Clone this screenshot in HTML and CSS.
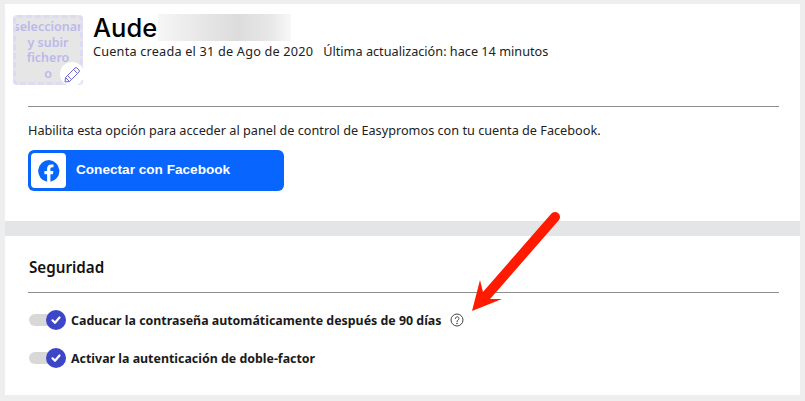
FILE: index.html
```html
<!DOCTYPE html>
<html>
    <head>
        <meta charset="utf-8">
        <title>Cuenta</title>
        <link rel="stylesheet" href="styles.css">
    </head>
    <body>
        <div class="frame">
            <section class="account">
                <div class="profile">
                    <div class="avatar">
                        <div class="avatar-text">seleccionar<br>y subir<br>fichero<br>o</div>
                        <span class="avatar-edit">
                            <svg width="17" height="17" viewBox="0 0 17 17" fill="none" stroke="#6a66dc" stroke-width="1" stroke-linejoin="round">
                                <path d="M1.500 11.500 L11 2 Q12 1 13 2 L15 4 Q16 5 15 6 L5.500 15.500 L1 16 Z"/>
                                <path d="M1.500 11.500 L5.500 15.500"/>
                                <path d="M3.500 9.500 L7.500 13.500"/>
                                <path d="M9.500 3.500 L13.500 7.500"/>
                            </svg>
                        </span>
                    </div>
                    <div class="profile-info">
                        <h1 class="name">Aude<span class="name-blur"></span></h1>
                        <p class="dates"><span class="created">Cuenta creada el 31 de Ago de 2020</span><span>Última actualización: hace 14 minutos</span></p>
                    </div>
                </div>
                <hr class="rule">
                <p class="fb-hint">Habilita esta opción para acceder al panel de control de Easypromos con tu cuenta de Facebook.</p>
                <a class="fb-button" href="#">
                    <span class="fb-icon">
                        <svg width="22" height="22" viewBox="0 0 22 22">
                            <path fill="#0866ff" d="M11 0a11 11 0 0 0-1.900 21.800v-7.600H6.400V11h2.700V8.600c0-2.700 1.600-4.200 4-4.200 1.200 0 2.400.2 2.400.2v2.700h-1.300c-1.300 0-1.800.8-1.800 1.700V11h3l-.5 3.200h-2.500v7.600A11 11 0 0 0 11 0z"/>
                        </svg>
                    </span>
                    <span>Conectar con Facebook</span>
                </a>
            </section>
            <div class="band"></div>
            <section class="security">
                <h2>Seguridad</h2>
                <hr class="rule">
                <div class="option option-first">
                    <span class="toggle"><span class="knob">
                        <svg width="12" height="12" viewBox="0 0 12 12" fill="none" stroke="#fff" stroke-width="2.200" stroke-linecap="round" stroke-linejoin="round"><path d="M2.500 6.300 L5 8.800 L9.500 3.500"/></svg>
                    </span></span>
                    <span class="option-label">Caducar la contraseña automáticamente después de 90 días</span>
                    <svg class="help" width="14" height="14" viewBox="0 0 14 14" fill="none" stroke="#444" stroke-width="1">
                        <circle cx="7" cy="7" r="6"/>
                        <path d="M5.300 5.500 a1.800 1.800 0 1 1 2.700 1.600 c-.7.4-1 .8-1 1.500" stroke-linecap="round"/>
                        <circle cx="7" cy="10.400" r=".4"/>
                    </svg>
                </div>
                <div class="option">
                    <span class="toggle"><span class="knob">
                        <svg width="12" height="12" viewBox="0 0 12 12" fill="none" stroke="#fff" stroke-width="2.200" stroke-linecap="round" stroke-linejoin="round"><path d="M2.500 6.300 L5 8.800 L9.500 3.500"/></svg>
                    </span></span>
                    <span class="option-label">Activar la autenticación de doble-factor</span>
                </div>
            </section>
            <!-- annotation drawn over the page -->
            <svg class="arrow" width="100" height="110" viewBox="0 0 100 110">
                <path d="M88 8 L19.500 86.500" stroke="#ff1a00" stroke-width="10" stroke-linecap="round" fill="none"/>
                <path d="M5 102 L13 71 L16 83 L23 90 L35 90 Z" fill="#ff1a00"/>
            </svg>
        </div>
    </body>
</html>
```

FILE: styles.css
```css
html, body {
    margin: 0;
    padding: 0;
}

body {
    background: #eeeeee;
    color: #111111;
    font-family: "Noto Sans", "Open Sans", sans-serif;
    width: 805px;
    height: 401px;
    overflow: hidden;
}

.frame {
    position: relative;
    margin: 4px 5px 5px 5px;
    width: 795px;
    height: 391px;
    background: #ffffff;
    display: flex;
    flex-direction: column;
}

.account {
    height: 217px;
    padding: 11px 21px 0 23px;
    box-sizing: border-box;
}

.profile {
    display: flex;
    height: 91px;
    margin-left: -15px;
}

.avatar {
    position: relative;
    flex: none;
    width: 70px;
    height: 70px;
    box-sizing: border-box;
    border: 3px dashed #dcdaf5;
    border-radius: 4px;
    background: #e6e6e6;
}

.avatar-text {
    height: 64px;
    overflow: hidden;
    padding-top: 1px;
    box-sizing: border-box;
    text-align: center;
    font-size: 12.500px;
    font-weight: 600;
    line-height: 15.500px;
    color: #bcb9ea;
    white-space: nowrap;
    display: flex;
    flex-direction: column;
    align-items: center;
}

.avatar-edit {
    position: absolute;
    right: -4px;
    bottom: -4px;
    width: 24px;
    height: 24px;
    border-radius: 50%;
    background: #ffffff;
    display: flex;
    align-items: center;
    justify-content: center;
}

.profile-info {
    margin-left: 10px;
}

.name {
    margin: 0;
    display: flex;
    align-items: center;
    height: 25px;
    font-family: "Inter", sans-serif;
    font-size: 25.500px;
    font-weight: 500;
    color: #000000;
}

.name-blur {
    display: inline-block;
    width: 133px;
    height: 27px;
    margin-left: 1px;
    background: linear-gradient(90deg, #f6f6f6, #e6e6e6 35%, #dcdcdc 60%, #e8e8e8 85%, #f8f8f8);
}

.dates {
    margin: 3px 0 0 0;
    font-size: 12.700px;
    line-height: 17px;
    color: #222222;
    white-space: nowrap;
}

.dates .created {
    letter-spacing: 0.200px;
    margin-right: 10px;
}

.rule {
    margin: 0;
    border: none;
    border-top: 1px solid #8f8f8f;
}

.fb-hint {
    margin: 14px 0 0 0;
    font-size: 12.700px;
    line-height: 18px;
    color: #222222;
    white-space: nowrap;
}

.fb-button {
    margin-top: 11px;
    display: flex;
    align-items: center;
    width: 256px;
    height: 41px;
    padding-left: 3px;
    box-sizing: border-box;
    border-radius: 6px;
    background: #0866ff;
    color: #ffffff;
    text-decoration: none;
    font-family: "Liberation Sans", sans-serif;
    font-size: 13.600px;
    font-weight: 700;
}

.fb-button span:last-child {
    margin-top: -2px;
}

.fb-icon {
    width: 35px;
    height: 35px;
    margin-right: 10px;
    border-radius: 4px;
    background: #ffffff;
    display: flex;
    align-items: center;
    justify-content: center;
}

.band {
    height: 15px;
    background: #e4e5e7;
}

.security {
    padding: 21px 21px 0 23px;
}

.security h2 {
    margin: 0 0 15px 0;
    padding-left: 1px;
    font-size: 15.200px;
    line-height: 20px;
    font-weight: 600;
    color: #111111;
}

.option {
    display: flex;
    align-items: center;
    margin-top: 18px;
    height: 20px;
}

.option-first {
    margin-top: 17px;
}

.toggle {
    position: relative;
    width: 37px;
    height: 12px;
    margin-left: 1px;
    border-radius: 6px;
    background: #d8d8d8;
}

.knob {
    position: absolute;
    right: 0;
    top: -4px;
    width: 20px;
    height: 20px;
    border-radius: 50%;
    background: #3e46c8;
    display: flex;
    align-items: center;
    justify-content: center;
}

.option-label {
    margin-left: 5px;
    font-size: 12.400px;
    font-weight: 700;
    color: #1a1a1a;
    white-space: nowrap;
}

.help {
    margin-left: 8px;
    margin-top: -1px;
}

.arrow {
    position: absolute;
    left: 462px;
    top: 205px;
}
```
